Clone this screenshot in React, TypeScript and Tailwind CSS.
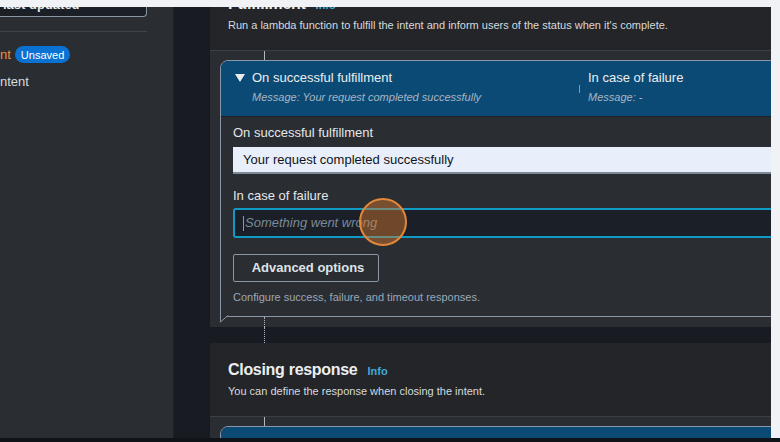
import React from 'react';

const font = { fontFamily: '"Liberation Sans", Arial, sans-serif' };

function Triangle() {
  return (
    <svg width="10" height="8" viewBox="0 0 10 8" className="shrink-0">
      <path d="M0 0 H10 L5 8 Z" fill="#e9ebed" />
    </svg>
  );
}

function PanelHeader({ title, desc }: { title: string; desc: string }) {
  return (
    <div className="bg-[#232529] pl-[18px] pt-[17px] pb-[17px] border-b border-[#3b3f46]">
      <div className="flex items-baseline gap-[10px] leading-5">
        <span className="text-[16px] font-bold tracking-[-0.3px] text-[#eceef0]">{title}</span>
        <span className="text-[11px] font-bold text-[#42a9d8]">Info</span>
      </div>
      <p className="mt-[2px] text-[11px] leading-4 text-[#d5dade]">{desc}</p>
    </div>
  );
}

function Connector({ dotted, h }: { dotted?: boolean; h: string }) {
  return (
    <div
      className={`ml-[54px] border-l ${dotted ? 'border-dotted border-[#aeb8c4]' : 'border-solid border-[#aeb8c4]'} ${h}`}
    />
  );
}

export default function App() {
  return (
    <div className="relative w-[780px] h-[442px] overflow-hidden bg-[#f0f2f6] flex flex-col" style={font}>
      {/* top light strip */}
      <div className="h-[7px] shrink-0" />

      <div className="flex h-[431px] shrink-0">
        <div className="w-[771px] flex overflow-hidden">
          {/* Sidebar */}
          <aside className="w-[174px] shrink-0 bg-[#2a2e33] border-r border-[#1f2227]">
            <div className="-mt-[14px] h-[24px] w-[147px] flex items-center justify-between pl-[3px] pr-[14px] bg-[#1b1f26] border-r border-b border-[#8b97a6] rounded-br-[4px]">
              <span className="text-[13px] font-bold text-[#e9ebed]">last updated</span>
              <svg width="8" height="6" viewBox="0 0 8 6">
                <path d="M1 1 L4 4 L7 1" stroke="#d1d5db" strokeWidth="1.5" fill="none" />
              </svg>
            </div>
            <div className="mt-[14px] h-px w-[147px] bg-[#3f444c]" />
            <div className="mt-[13px] flex items-center gap-[4px]">
              <span className="text-[13px] text-[#f08b34]">nt</span>
              <span className="h-[17px] px-[6px] rounded-full bg-[#0972d3] text-[11px] text-white flex items-center">Unsaved</span>
            </div>
            <div className="mt-[7px] text-[13px] leading-5 text-[#d5dade]">ntent</div>
          </aside>

          {/* Main */}
          <main className="flex-1 bg-[#181b22] pl-[36px] overflow-hidden">
            <div className="-mt-[30px] w-[600px]">
              {/* Fulfillment panel */}
              <section>
                <PanelHeader
                  title="Fulfillment"
                  desc="Run a lambda function to fulfill the intent and inform users of the status when it's complete."
                />
                <div className="bg-[#2a2d32]">
                  <Connector h="h-[9px]" />
                  <div className="relative ml-[10px] border border-[#8b97a6] rounded-tl-[8px] rounded-tr-[8px]">
                    <div className="flex bg-[#0b4a74] rounded-tl-[7px] rounded-tr-[7px] pt-[7px] pb-[11px] pl-[14px]">
                      <div className="w-[344px] flex flex-col">
                        <div className="flex items-center gap-[7px] leading-5">
                          <Triangle />
                          <span className="text-[13px] text-[#eceef0]">On successful fulfillment</span>
                        </div>
                        <span className="ml-[17px] mt-px text-[11px] leading-4 italic text-[#a9b5c2]">
                          Message: Your request completed successfully
                        </span>
                      </div>
                      <div className="w-px h-[8px] mt-[17px] bg-[#8b97a6]" />
                      <div className="ml-[8px] flex flex-col">
                        <span className="text-[13px] leading-5 text-[#eceef0]">In case of failure</span>
                        <span className="mt-px text-[11px] leading-4 italic text-[#a9b5c2]">Message: -</span>
                      </div>
                    </div>
                    <div className="border-t border-[#1d2127] pl-[12px] pt-[6px] pb-[11px]">
                      <label className="block text-[13px] leading-5 text-[#e4e7ea]">On successful fulfillment</label>
                      <div className="mt-[4px] h-[27px] bg-[#e8eefa] border-b-2 border-[#7d8998] flex items-center pl-[10px] text-[13px] text-[#0f141a]">
                        Your request completed successfully
                      </div>
                      <label className="mt-[12px] block text-[13px] leading-5 text-[#e4e7ea]">In case of failure</label>
                      <div className="mt-[2px] h-[30px] bg-[#1b1f27] border-2 border-[#0f9bc4] rounded-[3px] flex items-center pl-[8px] text-[13px] italic text-[#7d8998]">
                        <span className="w-px h-[15px] bg-[#8b97a6] mr-px" />
                        Something went wrong
                      </div>
                      <button className="mt-[16px] h-[28px] w-[146px] border border-[#8b97a6] rounded-[2px] pl-[4px] text-[13px] font-bold text-[#dfe3e7]">
                        Advanced options
                      </button>
                      <p className="mt-[7px] text-[11px] leading-4 text-[#9ba7b6]">
                        Configure success, failure, and timeout responses.
                      </p>
                    </div>
                    <svg className="absolute -left-px -bottom-[7px]" width="10" height="8" viewBox="0 0 10 8">
                      <path d="M0.5 0 V7 L8 0.5" stroke="#8b97a6" strokeWidth="1" fill="#2a2d32" />
                    </svg>
                  </div>
                  <Connector dotted h="h-[10px]" />
                </div>
              </section>

              <Connector dotted h="h-[16px]" />

              {/* Closing response panel */}
              <section>
                <PanelHeader title="Closing response" desc="You can define the response when closing the intent." />
                <div className="bg-[#2a2d32]">
                  <Connector h="h-[9px]" />
                  <div className="ml-[10px] border border-[#8b97a6] rounded-tl-[8px] rounded-tr-[8px]">
                    <div className="flex bg-[#0b4a74] rounded-tl-[7px] rounded-tr-[7px] pt-[8px] pb-[11px] pl-[14px]">
                      <div className="flex items-center gap-[7px] leading-5">
                        <Triangle />
                        <span className="text-[13px] text-[#eceef0]">Response sent to the user after the intent is fulfilled</span>
                      </div>
                    </div>
                  </div>
                </div>
              </section>
            </div>
          </main>
        </div>
        {/* right light strip */}
        <div className="flex-1" />
      </div>

      <div className="flex-1 bg-[#101318]" />

      {/* click indicator */}
      <div className="absolute left-[359px] top-[198px] w-[48px] h-[48px] rounded-full border-2 border-[#e3883a] bg-[rgba(214,122,48,0.45)]" />
    </div>
  );
}
